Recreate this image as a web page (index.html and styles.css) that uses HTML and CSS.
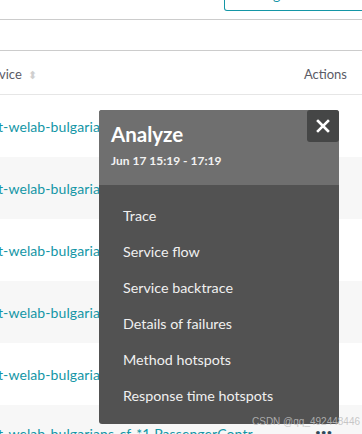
FILE: index.html
```html
<!DOCTYPE html>
<html>
<head>
<meta charset="utf-8">
<link rel="stylesheet" href="styles.css">
</head>
<body>
<div class="page">
  <div class="topbar">
    <div class="btn"><span class="btn-text">g</span></div>
  </div>
  <div class="spacer"></div>
  <div class="thead">
    <div class="th-service">vice <span class="sort">&#x2B0D;</span></div>
    <div class="th-actions">Actions</div>
  </div>
  <div class="row"><span class="link">t-welab-bulgarians-cf-*1 PassengerController</span></div>
  <div class="row alt"><span class="link">t-welab-bulgarians-cf-*1 PassengerController</span></div>
  <div class="row"><span class="link">t-welab-bulgarians-cf-*1 PassengerController</span></div>
  <div class="row alt"><span class="link">t-welab-bulgarians-cf-*1 PassengerController</span></div>
  <div class="row"><span class="link">t-welab-bulgarians-cf-*1 PassengerController</span></div>
  <div class="row alt last"><span class="link">t-welab-bulgarians-cf-*1 PassengerContr</span><span class="dots">•••</span></div>

  <div class="popup">
    <div class="popup-head">
      <div class="popup-title">Analyze</div>
      <div class="popup-date">Jun 17 15:19 - 17:19</div>
      <button class="close" aria-label="Close">
        <svg width="14" height="14" viewBox="0 0 14 14"><path d="M2 2 L12 12 M12 2 L2 12" stroke="#fff" stroke-width="2.6" stroke-linecap="square"/></svg>
      </button>
    </div>
    <ul class="menu">
      <li>Trace</li>
      <li>Service flow</li>
      <li>Service backtrace</li>
      <li>Details of failures</li>
      <li>Method hotspots</li>
      <li>Response time hotspots</li>
    </ul>
  </div>
  <div class="watermark">CSDN @qq_492448446</div>
</div>
</body>
</html>
```
FILE: styles.css
```css
html, body {
  margin: 0;
  padding: 0;
  background: #fff;
}
body {
  font-family: Lato, "Open Sans", sans-serif;
  overflow: hidden;
  width: 362px;
  height: 434px;
}
.page {
  position: relative;
  width: 362px;
  height: 434px;
  overflow: hidden;
}
.topbar {
  height: 19px;
  border-bottom: 1px solid #cccccc;
  position: relative;
}
.btn {
  margin-left: 224px;
  width: 150px;
  height: 10px;
  border: 1px solid #1496a6;
  border-top: none;
  border-radius: 0 0 0 3px;
  position: relative;
  overflow: hidden;
}
.btn-text {
  position: absolute;
  left: 48px;
  top: -12px;
  color: #1496a6;
  font-size: 14px;
  line-height: 14px;
}
.spacer {
  height: 30px;
  border-bottom: 1px solid #cccccc;
}
.thead {
  display: flex;
  align-items: center;
  justify-content: space-between;
  font-size: 13px;
  color: #5b5b66;
  padding-top: 2px;
  box-sizing: border-box;
  height: 44px;
  border-bottom: 1px solid #e6e6e6;
}
.th-service {
  margin-left: -1px;
}
.sort {
  color: #cfcfcf;
  font-size: 11px;
  margin-left: 3px;
}
.th-actions {
  margin-right: 15px;
}
.row {
  height: 62px;
  display: flex;
  align-items: center;
  white-space: nowrap;
  position: relative;
}
.row.alt {
  background: #f7f7f7;
}
.row.last {
  align-items: flex-start;
  padding-top: 20px;
  box-sizing: border-box;
}
.link {
  color: #1496a6;
  font-size: 14px;
  margin-left: -2px;
  letter-spacing: 0.1px;
}
.dots {
  position: absolute;
  left: 315px;
  top: 21px;
  color: #2e4a5c;
  font-size: 10px;
}
.popup {
  position: absolute;
  left: 99px;
  top: 110px;
  width: 240px;
  height: 314px;
  background: #525252;
  border-radius: 3px;
  overflow: hidden;
  color: #fff;
}
.popup-head {
  height: 75px;
  background: #6f6f6f;
  padding: 12px 0 0 12px;
  box-sizing: border-box;
  position: relative;
}
.popup-title {
  font-size: 20.5px;
  font-weight: 700;
  line-height: 24px;
}
.popup-date {
  font-size: 12px;
  font-weight: 700;
  margin-top: 7px;
  line-height: 15px;
  color: #f2f2f2;
}
.close {
  position: absolute;
  right: 0;
  top: 0;
  width: 32px;
  height: 32px;
  border: none;
  padding: 0;
  background: #454646;
  border-radius: 3px;
  display: flex;
  align-items: center;
  justify-content: center;
}
.menu {
  list-style: none;
  margin: 0;
  padding: 13px 0 0 24px;
}
.menu li {
  height: 36px;
  line-height: 36px;
  font-size: 14.3px;
  color: #f0f0f0;
}
.watermark {
  position: absolute;
  left: 252px;
  top: 416px;
  font-family: "Liberation Sans", Arial, sans-serif;
  font-size: 10px;
  color: rgba(190, 190, 190, 0.85);
  white-space: nowrap;
}
```
